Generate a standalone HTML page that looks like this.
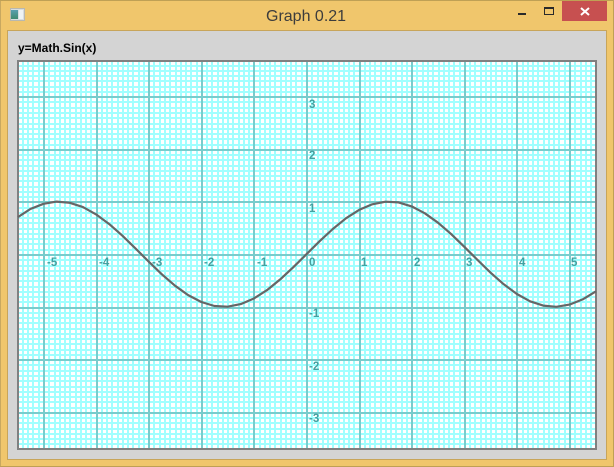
<!DOCTYPE html>
<html><head><meta charset="utf-8"><style>
html,body{margin:0;padding:0;width:614px;height:467px;overflow:hidden;background:#f0c66c}
div{position:absolute;box-sizing:border-box}
#win{left:0;top:0;width:614px;height:467px;background:#f0c66c;border:1px solid #bfa055;border-width:1px 1px 1px 0;box-shadow:inset 1px 0 0 #c8a860}
#panel{left:7px;top:30px;width:600px;height:430px;background:#d4d4d4;border:1px solid #c8a55a}
#frame{left:17px;top:60px;width:580px;height:390px;border:2px solid #808080;overflow:hidden}
.t{position:absolute;white-space:nowrap;font-family:"Liberation Sans",sans-serif}
.l{position:absolute;white-space:nowrap;font:bold 11.5px/13px "Liberation Sans",sans-serif;color:#45a0a0}
</style></head><body>
<div id="win"></div>
<div style="left:10px;top:8px;width:15px;height:13px;background:#d8dde0;border:1px solid #b8b8b0"></div>
<div style="left:11px;top:10px;width:7px;height:9px;background:linear-gradient(#5a9fb0,#3f8a70)"></div>
<div style="left:19px;top:10px;width:4px;height:9px;background:#eef2f4"></div>
<div class="t" style="left:266px;top:7px;font-size:16px;line-height:19px;color:#3c3c3c">Graph 0.21</div>
<div style="left:518px;top:13px;width:8px;height:2px;background:#2a2a2a"></div>
<div style="left:544px;top:7px;width:10px;height:8px;border:1px solid #2a2a2a;border-top-width:2px"></div>
<div style="left:562px;top:1px;width:45px;height:20px;background:#c75050"></div>
<svg style="position:absolute;left:0;top:0" width="614" height="30"><path d="M581 8L589 15M589 8L581 15" stroke="#fff" stroke-width="2"/></svg>
<div id="panel"></div>
<div class="t" style="left:18px;top:41px;font-size:12px;font-weight:bold;line-height:14px;color:#000">y=Math.Sin(x)</div>
<svg style="position:absolute;left:19px;top:62px;background:#fff" width="576" height="386" viewBox="19 62 576 386" shape-rendering="crispEdges">
<path fill="none" stroke="#a0ffff" stroke-width="2" d="M23 62V448M28 62V448M33 62V448M39 62V448M44 62V448M49 62V448M55 62V448M60 62V448M65 62V448M70 62V448M76 62V448M81 62V448M86 62V448M91 62V448M97 62V448M102 62V448M107 62V448M112 62V448M118 62V448M123 62V448M128 62V448M133 62V448M139 62V448M144 62V448M149 62V448M154 62V448M160 62V448M165 62V448M170 62V448M176 62V448M181 62V448M186 62V448M191 62V448M197 62V448M202 62V448M207 62V448M212 62V448M218 62V448M223 62V448M228 62V448M233 62V448M239 62V448M244 62V448M249 62V448M254 62V448M260 62V448M265 62V448M270 62V448M275 62V448M281 62V448M286 62V448M291 62V448M296 62V448M302 62V448M307 62V448M312 62V448M318 62V448M323 62V448M328 62V448M333 62V448M339 62V448M344 62V448M349 62V448M354 62V448M360 62V448M365 62V448M370 62V448M375 62V448M381 62V448M386 62V448M391 62V448M396 62V448M402 62V448M407 62V448M412 62V448M417 62V448M423 62V448M428 62V448M433 62V448M439 62V448M444 62V448M449 62V448M454 62V448M460 62V448M465 62V448M470 62V448M475 62V448M481 62V448M486 62V448M491 62V448M496 62V448M502 62V448M507 62V448M512 62V448M517 62V448M523 62V448M528 62V448M533 62V448M538 62V448M544 62V448M549 62V448M554 62V448M559 62V448M565 62V448M570 62V448M575 62V448M581 62V448M586 62V448M591 62V448"/>
<path fill="none" stroke="#a0ffff" stroke-width="2" d="M19 66H595M19 71H595M19 76H595M19 81H595M19 87H595M19 92H595M19 97H595M19 102H595M19 108H595M19 113H595M19 118H595M19 124H595M19 129H595M19 134H595M19 139H595M19 145H595M19 150H595M19 155H595M19 160H595M19 166H595M19 171H595M19 176H595M19 181H595M19 187H595M19 192H595M19 197H595M19 202H595M19 208H595M19 213H595M19 218H595M19 223H595M19 229H595M19 234H595M19 239H595M19 244H595M19 250H595M19 255H595M19 260H595M19 266H595M19 271H595M19 276H595M19 281H595M19 287H595M19 292H595M19 297H595M19 302H595M19 308H595M19 313H595M19 318H595M19 323H595M19 329H595M19 334H595M19 339H595M19 344H595M19 350H595M19 355H595M19 360H595M19 365H595M19 371H595M19 376H595M19 381H595M19 387H595M19 392H595M19 397H595M19 402H595M19 408H595M19 413H595M19 418H595M19 423H595M19 429H595M19 434H595M19 439H595M19 444H595"/>
<path fill="none" stroke="#78cccc" stroke-width="2" d="M44 62V448M97 62V448M149 62V448M202 62V448M254 62V448M307 62V448M360 62V448M412 62V448M465 62V448M517 62V448M570 62V448M19 97H595M19 150H595M19 202H595M19 255H595M19 308H595M19 360H595M19 413H595"/>
</svg>
<div id="frame"></div>
<div class="l" style="left:47px;top:257px">-5</div>
<div class="l" style="left:99px;top:257px">-4</div>
<div class="l" style="left:152px;top:257px">-3</div>
<div class="l" style="left:204px;top:257px">-2</div>
<div class="l" style="left:257px;top:257px">-1</div>
<div class="l" style="left:309px;top:257px">0</div>
<div class="l" style="left:361px;top:257px">1</div>
<div class="l" style="left:414px;top:257px">2</div>
<div class="l" style="left:466px;top:257px">3</div>
<div class="l" style="left:519px;top:257px">4</div>
<div class="l" style="left:571px;top:257px">5</div>
<div class="l" style="left:309px;top:99px">3</div>
<div class="l" style="left:309px;top:150px">2</div>
<div class="l" style="left:309px;top:203px">1</div>
<div class="l" style="left:309px;top:308px">-1</div>
<div class="l" style="left:309px;top:361px">-2</div>
<div class="l" style="left:309px;top:413px">-3</div>
<svg style="position:absolute;left:0;top:0" width="614" height="467"><polyline transform="translate(-0.5,-0.8)" fill="none" stroke="#666" stroke-width="2.2" stroke-linejoin="round" points="18.5,217.9 30.85,209.8 44,204.6 57.15,202.4 70.3,203.6 83.45,207.9 96.6,215.2 109.75,224.9 122.9,236.5 136.05,249.3 149.2,262.4 162.35,275.1 175.5,286.5 188.65,295.9 201.8,302.8 214.95,306.8 228.1,307.5 241.25,304.9 254.4,299.3 267.55,290.9 280.7,280.2 293.85,268 307,255 320.15,242 333.3,229.8 346.45,219.1 359.6,210.7 372.75,205.1 385.9,202.5 399.05,203.2 412.2,207.2 425.35,214.1 438.5,223.5 451.65,234.9 464.8,247.6 477.95,260.7 491.1,273.5 504.25,285.1 517.4,294.8 530.55,302.1 543.7,306.4 556.85,307.6 570,305.4 583.15,300.2 596.5,292.1"/></svg>
</body></html>
